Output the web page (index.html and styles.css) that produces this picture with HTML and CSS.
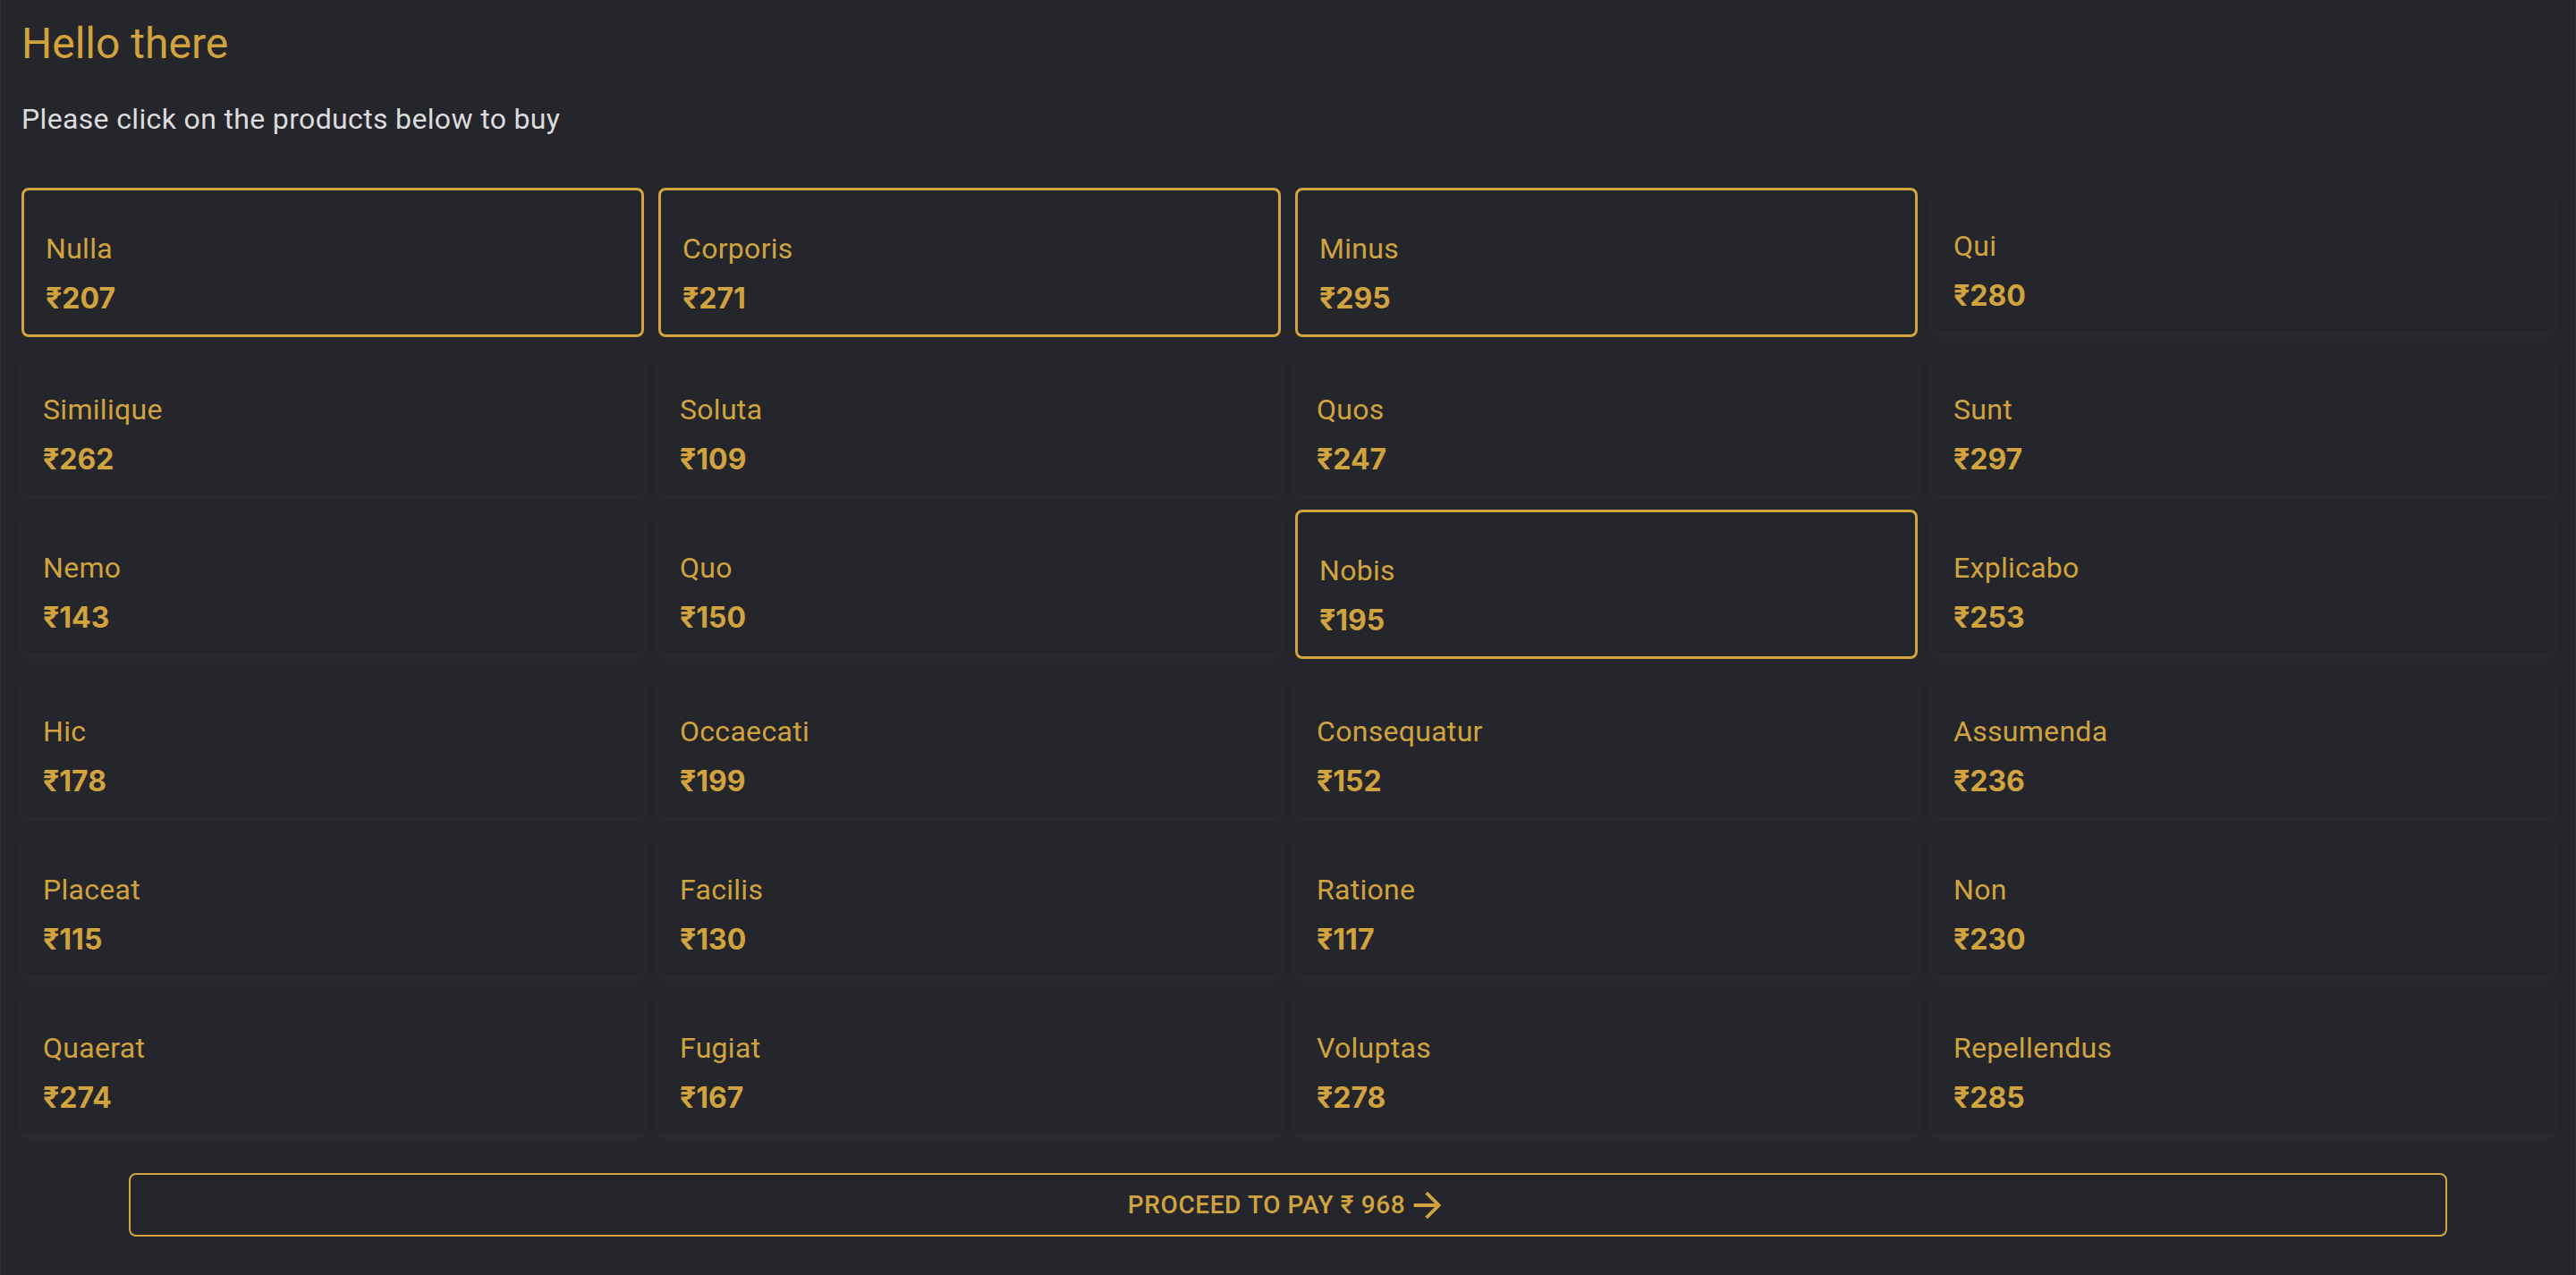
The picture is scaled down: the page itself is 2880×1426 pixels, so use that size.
FILE: index.html
```html
<!DOCTYPE html>
<html lang="en">
<head>
<meta charset="utf-8">
<title>Shop</title>
<link rel="stylesheet" href="styles.css">
</head>
<body>
<main class="page">
  <h1 class="title">Hello there</h1>
  <p class="subtitle">Please click on the products below to buy</p>
  <section class="grid">
    <div class="card selected"><div class="name">Nulla</div><div class="price">₹207</div></div>
    <div class="card selected"><div class="name">Corporis</div><div class="price">₹271</div></div>
    <div class="card selected"><div class="name">Minus</div><div class="price">₹295</div></div>
    <div class="card"><div class="name">Qui</div><div class="price">₹280</div></div>

    <div class="card"><div class="name">Similique</div><div class="price">₹262</div></div>
    <div class="card"><div class="name">Soluta</div><div class="price">₹109</div></div>
    <div class="card"><div class="name">Quos</div><div class="price">₹247</div></div>
    <div class="card"><div class="name">Sunt</div><div class="price">₹297</div></div>

    <div class="card"><div class="name">Nemo</div><div class="price">₹143</div></div>
    <div class="card"><div class="name">Quo</div><div class="price">₹150</div></div>
    <div class="card selected"><div class="name">Nobis</div><div class="price">₹195</div></div>
    <div class="card"><div class="name">Explicabo</div><div class="price">₹253</div></div>

    <div class="card"><div class="name">Hic</div><div class="price">₹178</div></div>
    <div class="card"><div class="name">Occaecati</div><div class="price">₹199</div></div>
    <div class="card"><div class="name">Consequatur</div><div class="price">₹152</div></div>
    <div class="card"><div class="name">Assumenda</div><div class="price">₹236</div></div>

    <div class="card"><div class="name">Placeat</div><div class="price">₹115</div></div>
    <div class="card"><div class="name">Facilis</div><div class="price">₹130</div></div>
    <div class="card"><div class="name">Ratione</div><div class="price">₹117</div></div>
    <div class="card"><div class="name">Non</div><div class="price">₹230</div></div>

    <div class="card"><div class="name">Quaerat</div><div class="price">₹274</div></div>
    <div class="card"><div class="name">Fugiat</div><div class="price">₹167</div></div>
    <div class="card"><div class="name">Voluptas</div><div class="price">₹278</div></div>
    <div class="card"><div class="name">Repellendus</div><div class="price">₹285</div></div>
  </section>
  <div class="footer">
    <button class="pay" type="button">
      <span class="pay-label">Proceed to pay ₹ 968</span>
      <svg class="pay-icon" viewBox="0 0 24 24" aria-hidden="true"><path d="M12 4l-1.41 1.41L16.17 11H4v2h12.17l-5.58 5.59L12 20l8-8z"/></svg>
    </button>
  </div>
</main>
</body>
</html>
```

FILE: styles.css
```css
* { box-sizing: border-box; }

html, body {
  margin: 0;
  padding: 0;
  background: #25262b;
}

body {
  font-family: Roboto, "Liberation Sans", Arial, sans-serif;
  color: #d1a33f;
  min-height: 1426px;
  border-left: 1px solid #303137;
  border-right: 1px solid #303137;
}

.page {
  padding: 21px 23px 0;
}

.title {
  margin: 0;
  font-size: 48px;
  line-height: 56px;
  font-weight: 400;
  color: #d1a33f;
}

.subtitle {
  margin: 32px 0 0;
  font-size: 32px;
  line-height: 48px;
  font-weight: 400;
  letter-spacing: 0.35px;
  color: #dcdcde;
}

.grid {
  margin-top: 53px;
  display: grid;
  grid-template-columns: repeat(4, 1fr);
  column-gap: 16px;
  row-gap: 16px;
  align-items: start;
}

.card {
  background: #25262b;
  padding: 41px 24px 16px;
  border-radius: 2px;
  box-shadow: 0 6px 14px rgba(255, 255, 255, 0.03), 0 0 8px rgba(255, 255, 255, 0.02);
}

.card.selected {
  border: 3px solid #d4a53e;
  border-radius: 8px;
  box-shadow: none;
}

.name {
  font-size: 32px;
  line-height: 48px;
  font-weight: 400;
  letter-spacing: 0.3px;
  color: #d1a33f;
}

.price {
  margin-top: 8px;
  font-family: Inter, Roboto, "Liberation Sans", Arial, sans-serif;
  font-size: 32px;
  line-height: 48px;
  font-weight: 700;
  color: #d1a33f;
}

.footer {
  margin-top: 44px;
  padding: 0 120px;
}

.pay {
  width: 100%;
  height: 71px;
  display: flex;
  align-items: center;
  justify-content: center;
  background: transparent;
  border: 2px solid #d1a33f;
  border-radius: 8px;
  color: #d1a33f;
  font-family: Roboto, "Liberation Sans", Arial, sans-serif;
  font-size: 28px;
  font-weight: 500;
  letter-spacing: 0.6px;
  text-transform: uppercase;
  padding: 0;
  cursor: pointer;
}

.pay-icon {
  width: 46px;
  height: 46px;
  margin-left: 2px;
  fill: #d1a33f;
}
```
